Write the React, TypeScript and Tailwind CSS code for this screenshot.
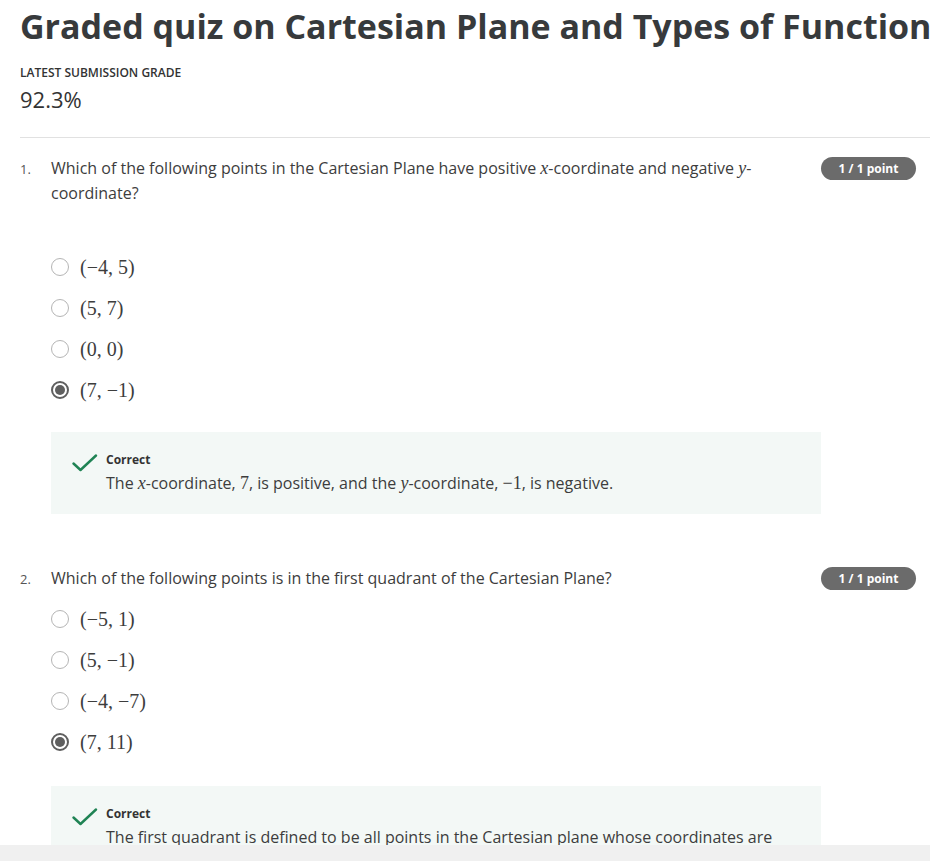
import React from "react";

const serif = { fontFamily: '"Liberation Serif", "DejaVu Serif", serif' };

const M = ({ children }: { children: React.ReactNode }) => (
  <span className="font-['Liberation_Serif',serif] italic text-[18px] leading-none">{children}</span>
);
const N = ({ children }: { children: React.ReactNode }) => (
  <span className="font-['Liberation_Serif',serif] text-[18px] leading-none">{children}</span>
);

const Radio = ({ checked }: { checked?: boolean }) =>
  checked ? (
    <span className="w-[18px] h-[18px] rounded-full border-2 border-[#5f5f5f] flex items-center justify-center shrink-0">
      <span className="w-[10px] h-[10px] rounded-full bg-[#5f5f5f]" />
    </span>
  ) : (
    <span className="block w-[18px] h-[18px] rounded-full border-[1.5px] border-[#b5b5b5] shrink-0" />
  );

const Check = () => (
  <svg width="26" height="18" viewBox="0 0 26 18" className="shrink-0 mt-[3px]">
    <path d="M1.5 9.5 L8.5 16 L24 1.5" fill="none" stroke="#1f8354" strokeWidth="2.4" strokeLinecap="round" strokeLinejoin="round" />
  </svg>
);

const Option = ({ label, checked }: { label: string; checked?: boolean }) => (
  <div className="flex items-center gap-[11px] h-[41px]">
    <Radio checked={checked} />
    <span className="text-[20px] text-[#3d3d3d]" style={serif}>{label}</span>
  </div>
);

const Feedback = ({ children }: { children: React.ReactNode }) => (
  <div className="bg-[#f3f8f6] w-[770px] pl-[21px] pr-6 pt-[19px] pb-[18px] flex gap-[8px]">
    <Check />
    <div>
      <div className="text-[12px] font-bold text-[#333] leading-[18px]">Correct</div>
      <div className="text-[16px] text-[#3d3d3d] leading-[26px] mt-[1px]">{children}</div>
    </div>
  </div>
);

const Badge = () => (
  <span className="bg-[#6b6b6b] text-white text-[12px] font-bold rounded-full h-[23px] w-[95px] flex items-center justify-center shrink-0">
    1 / 1 point
  </span>
);

const Question = ({
  num,
  text,
  options,
  gap,
  fbGap,
  feedback,
}: {
  num: string;
  text: React.ReactNode;
  options: { label: string; checked?: boolean }[];
  gap: string;
  fbGap: string;
  feedback: React.ReactNode;
}) => (
  <div className="flex">
    <div className="w-[31px] text-[13px] text-[#555] leading-[25px] pt-[1px]">{num}</div>
    <div className="flex-1">
      <div className="flex justify-between">
        <div className="w-[720px] text-[16px] text-[#3d3d3d] leading-[25px]">{text}</div>
        <div className="pt-[1px] pr-[14px]"><Badge /></div>
      </div>
      <div className={gap}>
        {options.map((o) => (
          <Option key={o.label} label={o.label} checked={o.checked} />
        ))}
      </div>
      <div className={fbGap}>
        <Feedback>{feedback}</Feedback>
      </div>
    </div>
  </div>
);

export default function App() {
  return (
    <div className="h-[861px] flex flex-col bg-white font-['Open_Sans',sans-serif] overflow-hidden">
      <div className="flex-1 overflow-hidden pl-5">
        <h1 className="text-[34px] font-bold text-[#373a3c] leading-[48px] whitespace-nowrap pt-[2px]">
          Graded quiz on Cartesian Plane and Types of Functions
        </h1>
        <div className="mt-[14px] text-[12px] font-semibold text-[#333] leading-[18px]">LATEST SUBMISSION GRADE</div>
        <div className="text-[22px] text-[#333] leading-[30px] mt-[2px]">92.3%</div>
        <div className="mt-[23px] border-t border-[#e1e1e1]" />

        <div className="pt-[18px]">
          <Question
            num="1."
            text={
              <>
                Which of the following points in the Cartesian Plane have positive <M>x</M>-coordinate and negative <M>y</M>-
                coordinate?
              </>
            }
            gap="mt-[40px]"
            fbGap="mt-[22px]"
            options={[
              { label: "(−4, 5)" },
              { label: "(5, 7)" },
              { label: "(0, 0)" },
              { label: "(7, −1)", checked: true },
            ]}
            feedback={
              <>
                The <M>x</M>-coordinate, <N>7</N>, is positive, and the <M>y</M>-coordinate, <N>−1</N>, is negative.
              </>
            }
          />
        </div>

        <div className="pt-[52px]">
          <Question
            num="2."
            text="Which of the following points is in the first quadrant of the Cartesian Plane?"
            gap="mt-[7px]"
            fbGap="mt-[24px]"
            options={[
              { label: "(−5, 1)" },
              { label: "(5, −1)" },
              { label: "(−4, −7)" },
              { label: "(7, 11)", checked: true },
            ]}
            feedback={
              <>The first quadrant is defined to be all points in the Cartesian plane whose coordinates are both positive.</>
            }
          />
        </div>
      </div>
      <div className="h-4 bg-[#f0f0f0] shrink-0" />
    </div>
  );
}
